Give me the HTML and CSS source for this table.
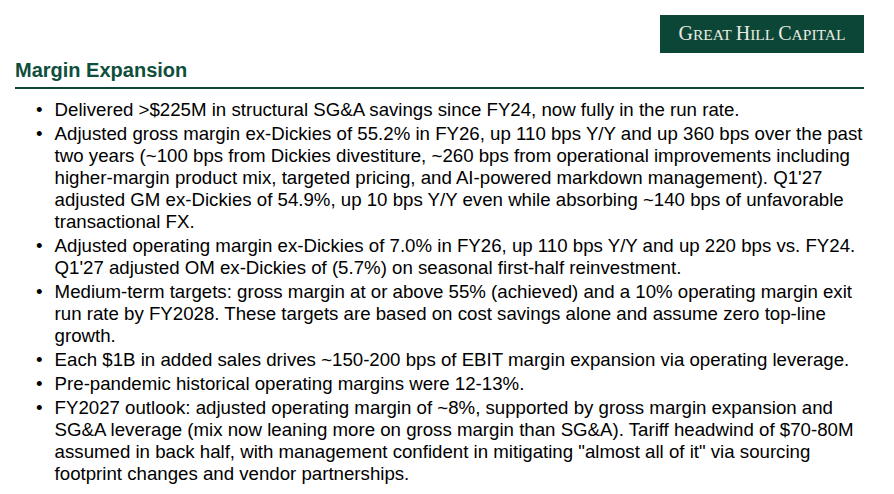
FILE: index.html
```html
<!DOCTYPE html>
<html lang="en">
<head>
<meta charset="utf-8">
<title>Margin Expansion</title>
<link rel="stylesheet" href="styles.css">
</head>
<body>
<div class="page">
  <header class="topbar">
    <div class="logo"><span class="logo-text"><span class="cap">G</span><span class="sc">reat</span> <span class="cap">H</span><span class="sc">ill</span> <span class="cap">C</span><span class="sc">apital</span></span></div>
  </header>
  <h1 class="title">Margin Expansion</h1>
  <ul class="points">
    <li>Delivered &gt;$225M in structural SG&amp;A savings since FY24, now fully in the run rate.</li>
    <li>Adjusted gross margin ex-Dickies of 55.2% in FY26, up 110 bps Y/Y and up 360 bps over the past two years (~100 bps from Dickies divestiture, ~260 bps from operational improvements including higher-margin product mix, targeted pricing, and AI-powered markdown management). Q1'27 adjusted GM ex-Dickies of 54.9%, up 10 bps Y/Y even while absorbing ~140 bps of unfavorable transactional FX.</li>
    <li>Adjusted operating margin ex-Dickies of 7.0% in FY26, up 110 bps Y/Y and up 220 bps vs. FY24. Q1'27 adjusted OM ex-Dickies of (5.7%) on seasonal first-half reinvestment.</li>
    <li>Medium-term targets: gross margin at or above 55% (achieved) and a 10% operating margin exit run rate by FY2028. These targets are based on cost savings alone and assume zero top-line growth.</li>
    <li>Each $1B in added sales drives ~150-200 bps of EBIT margin expansion via operating leverage.</li>
    <li>Pre-pandemic historical operating margins were 12-13%.</li>
    <li>FY2027 outlook: adjusted operating margin of ~8%, supported by gross margin expansion and SG&amp;A leverage (mix now leaning more on gross margin than SG&amp;A). Tariff headwind of $70-80M assumed in back half, with management confident in mitigating "almost all of it" via sourcing footprint changes and vendor partnerships.</li>
  </ul>
</div>
</body>
</html>
```

FILE: styles.css
```css
html, body {
  margin: 0;
  padding: 0;
  background: #ffffff;
}

.page {
  width: 894px;
  height: 494px;
  box-sizing: border-box;
  padding: 15px 30px 0 15px;
  font-family: "Liberation Sans", Arial, sans-serif;
  color: #000000;
  overflow: hidden;
}

.topbar {
  display: flex;
  justify-content: flex-end;
}

.logo {
  width: 204px;
  height: 38px;
  background: #0c4636;
  color: #e9ebe3;
  font-family: "Liberation Serif", "Times New Roman", serif;
  display: flex;
  align-items: center;
  justify-content: center;
  line-height: 22px;
}

.logo-text {
  white-space: nowrap;
}

.logo .cap {
  font-size: 20px;
}

.logo .sc {
  font-size: 15.5px;
  text-transform: uppercase;
}

.title {
  margin: 5px 0 0 0;
  padding: 0 0 5px 0;
  font-size: 20px;
  line-height: 24px;
  font-weight: bold;
  color: #0f4e3c;
  border-bottom: 2px solid #0c4636;
}

.points {
  list-style: none;
  margin: 10px -6px 0 21px;
  padding: 0;
  font-size: 18.67px;
  line-height: 22px;
}

.points li {
  display: flex;
  margin-top: 2px;
}

.points li:first-child {
  margin-top: 0;
}

.points li::before {
  content: "\2022";
  flex: 0 0 18.6px;
}
```
